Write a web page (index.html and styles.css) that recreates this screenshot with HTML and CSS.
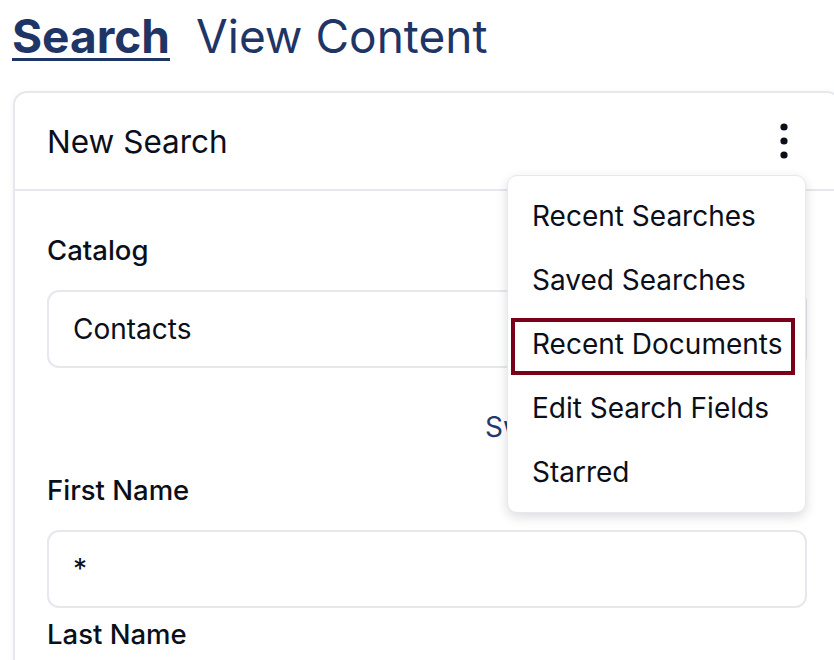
FILE: index.html
```html
<!DOCTYPE html>
<html><head><title>Search</title>
<meta charset="utf-8">
<link rel="stylesheet" href="styles.css">
</head>
<body>
<div id="page">
	<div class="tabs">
		<a class="tab active" href="#">Search</a>
		<a class="tab" href="#">View Content</a>
	</div>

	<div class="card">
		<div class="card-header">
			<span class="card-title">New Search</span>
			<span class="kebab">
				<svg width="12" height="40" viewBox="0 0 12 40">
					<circle cx="6" cy="6" r="3.6" fill="#0b0f19"/>
					<circle cx="6" cy="20" r="3.6" fill="#0b0f19"/>
					<circle cx="6" cy="34" r="3.6" fill="#0b0f19"/>
				</svg>
			</span>
			<!-- open menu -->
			<ul class="menu">
				<li>Recent Searches</li>
				<li>Saved Searches</li>
				<li class="marked">Recent Documents<span class="mark"></span></li>
				<li>Edit Search Fields</li>
				<li>Starred</li>
			</ul>
		</div>

		<div class="card-body">
			<div class="field">
				<label>Catalog</label>
				<div class="input">Contacts</div>
			</div>
			<div class="linkrow"><a href="#">Switch Catalog</a></div>
			<div class="field">
				<label>First Name</label>
				<div class="input">*</div>
			</div>
			<div class="field">
				<label>Last Name</label>
				<div class="input"></div>
			</div>
		</div>
	</div>
</div>
</body></html>
```

FILE: styles.css
```css
html { overflow: hidden; }
body { margin: 0;
	font-family: Inter, "Noto Sans", sans-serif;
	color: #0b0f19;
	background: #fff;
}
#page {
	padding: 13px 0 0 12px;
}
.tabs {
	display: flex;
	gap: 26px;
	font-size: 46px;
	line-height: 46px;
}
.tab {
	color: #1f3566;
	text-decoration: none;
}
.tab.active {
	font-weight: 700;
	text-decoration: underline;
	text-decoration-thickness: 3px;
	text-underline-offset: 5px;
}
.card {
	margin: 32px 0 0 1px;
	width: 828px;
	box-sizing: border-box;
	border: 2px solid #e6e8ee;
	border-radius: 14px;
	box-shadow: 0 1px 6px rgba(0,0,0,0.05);
}
.card-header {
	position: relative;
	display: flex;
	align-items: center;
	justify-content: space-between;
	height: 96px;
	padding: 0 49px 0 32px;
	border-bottom: 2px solid #e6e8ee;
}
.card-title { font-size: 31.5px; }
.kebab { display: flex; }
.menu {
	position: absolute;
	left: 492px;
	top: 82px;
	width: 299px;
	box-sizing: border-box;
	margin: 0;
	padding: 8px 0;
	list-style: none;
	background: #fff;
	border: 1px solid #e6e8ee;
	border-radius: 10px;
	box-shadow: 0 4px 12px rgba(0,0,0,0.14);
	z-index: 5;
}
.menu li {
	position: relative;
	height: 64px;
	line-height: 64px;
	padding-left: 24px;
	font-size: 28px;
}
.mark {
	position: absolute;
	left: 3px;
	top: 6px;
	width: 284px;
	height: 57px;
	box-sizing: border-box;
	border: 4px solid #7a0019;
}
.card-body {
	padding: 42px 32px 0 32px;
}
.field { margin-bottom: 9px; }
.field label {
	display: block;
	font-size: 27.5px;
	font-weight: 500;
	line-height: 34px;
	margin-bottom: 23px;
}
.input {
	height: 78px;
	box-sizing: border-box;
	border: 2px solid #e6e8ee;
	border-radius: 12px;
	padding-left: 24px;
	font-size: 28px;
	line-height: 74px;
}
.linkrow {
	margin: 42px 0 29px;
	padding-left: 438px;
	font-size: 28px;
	line-height: 34px;
}
.linkrow a { color: #1f3a70; text-decoration: none; }
```
